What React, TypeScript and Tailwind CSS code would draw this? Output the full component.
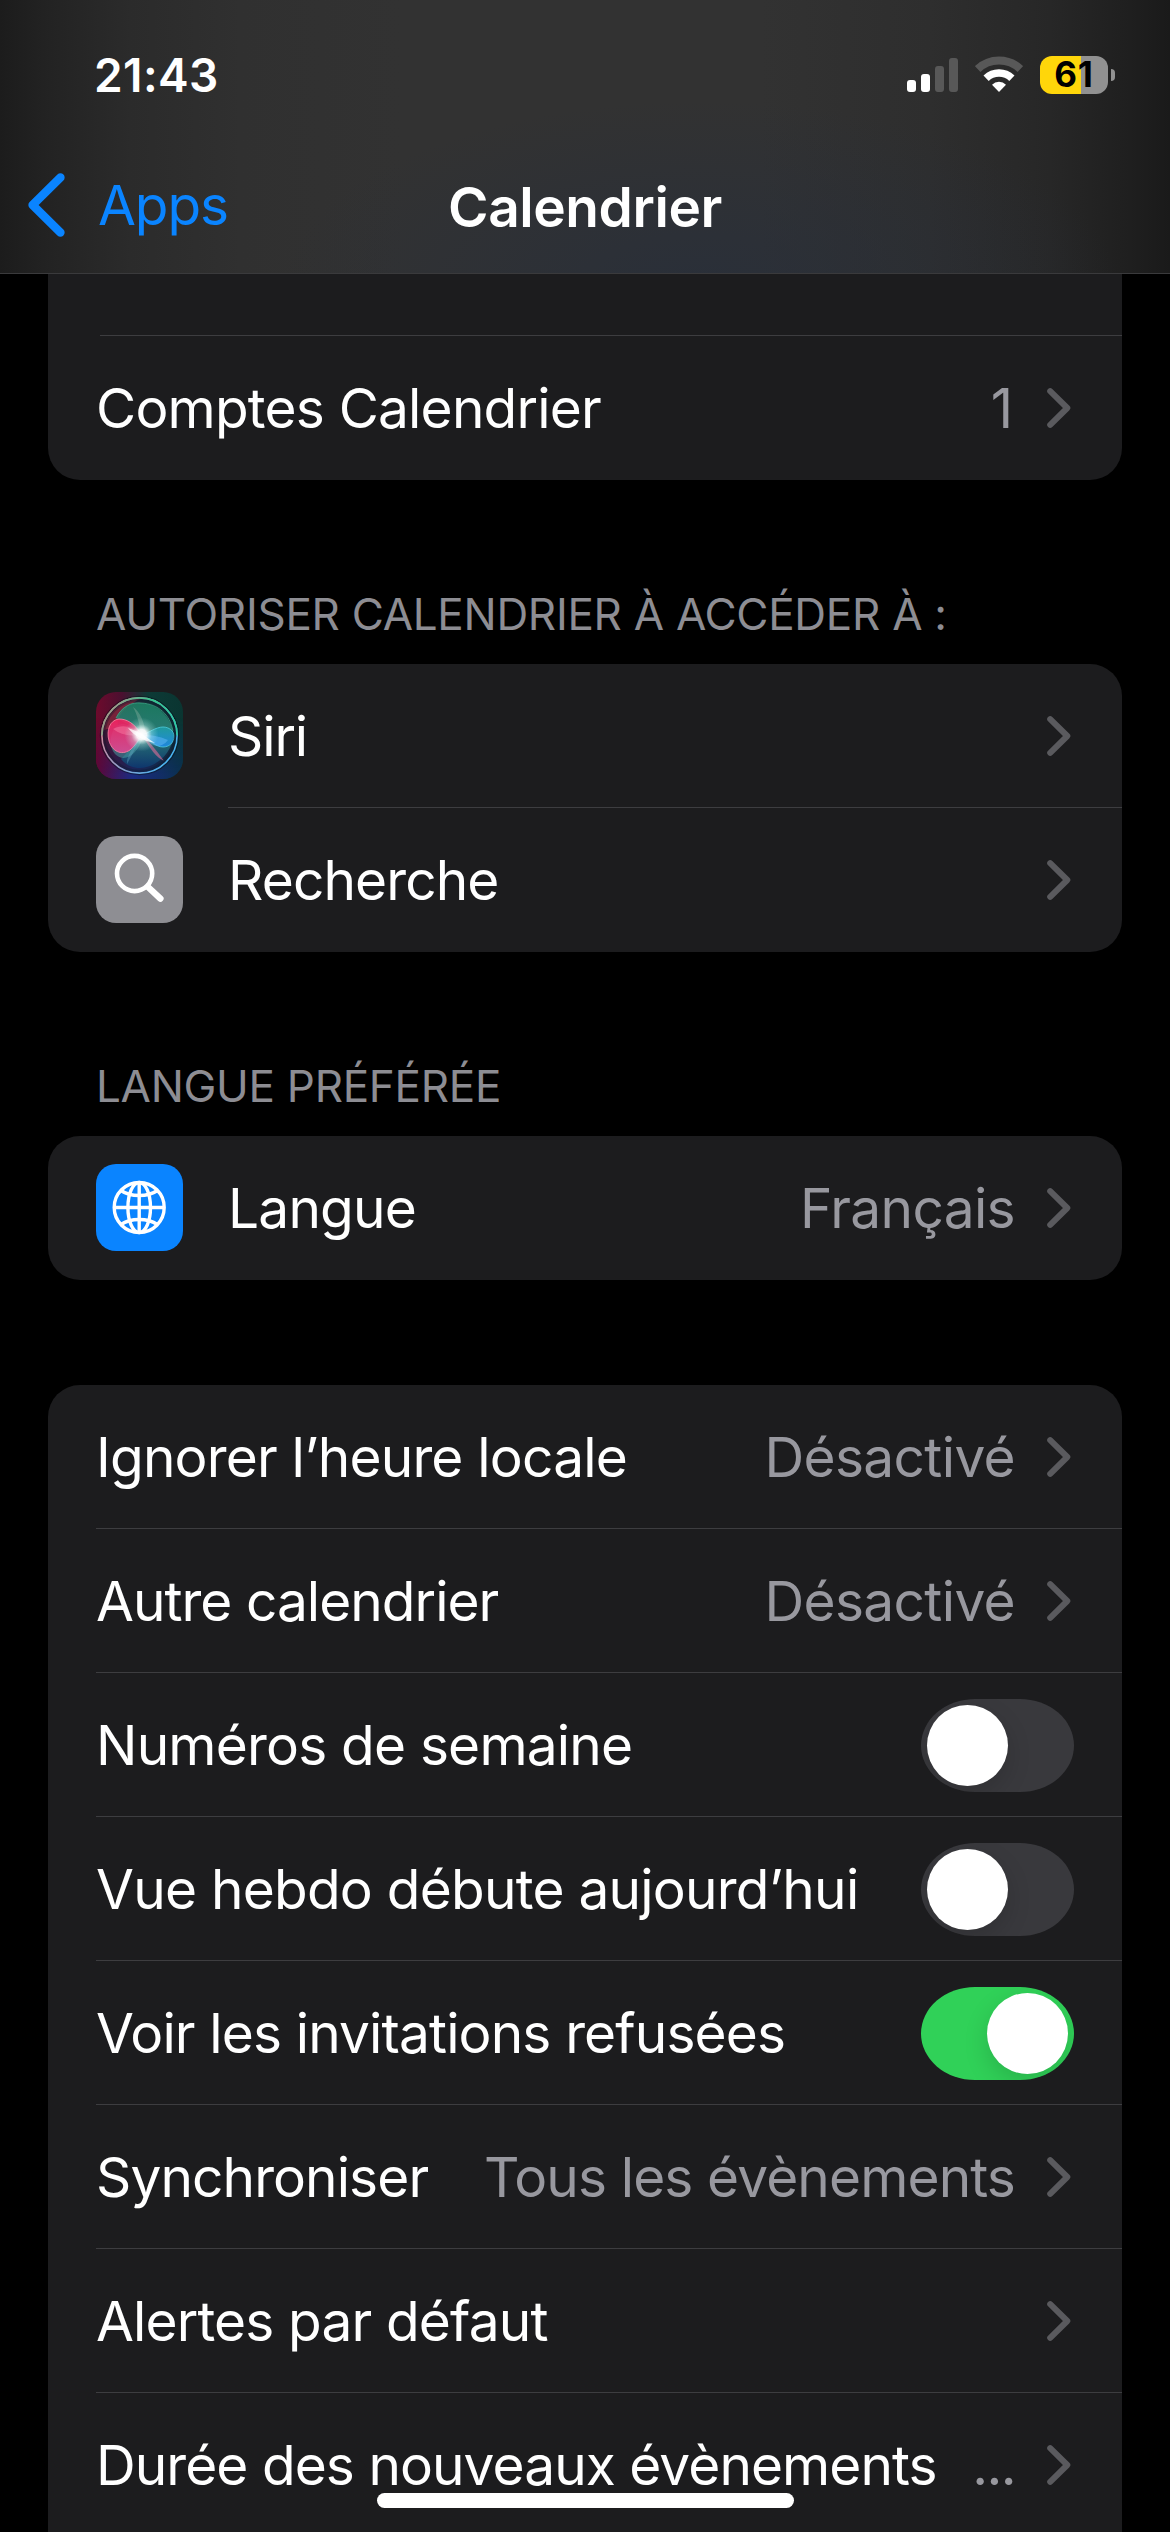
import React from 'react';

interface RowProps {
    label: string;
    tracking?: string;
    value?: string;
    valueTracking?: string;
    icon?: React.ReactNode;
    toggle?: boolean;
    last?: boolean;
}

const ChevronRight: React.FC = () => (
    <svg className="mr-[3px] h-10 w-6 shrink-0" viewBox="0 0 24 40" fill="none" stroke="#5a5a5e" strokeWidth="6" strokeLinecap="round" strokeLinejoin="round">
        <path d="M3.2 3.2 20.3 20 3.2 36.8" />
    </svg>
);

const SiriIcon: React.FC = () => (
    <svg className="mb-px size-[87px] shrink-0 rounded-[20px]" viewBox="0 0 87 87" fill="none">
        <defs>
            <linearGradient id="siriBase" x1="0" y1="0" x2="1" y2="0">
                <stop offset="0" stopColor="#6d0a2c" />
                <stop offset=".3" stopColor="#4a1030" />
                <stop offset=".6" stopColor="#0d3a36" />
                <stop offset="1" stopColor="#0a3531" />
            </linearGradient>
            <linearGradient id="siriBottom" x1="0" y1="0" x2="1" y2="0">
                <stop offset="0" stopColor="#5c0638" />
                <stop offset=".42" stopColor="#1b2a80" />
                <stop offset="1" stopColor="#0a3050" />
            </linearGradient>
            <linearGradient id="siriFade" x1="0" y1="0" x2="0" y2="1">
                <stop offset=".3" stopColor="#000" />
                <stop offset=".95" stopColor="#fff" />
            </linearGradient>
            <mask id="siriMask"><rect width="87" height="87" fill="url(#siriFade)" /></mask>
            <linearGradient id="siriRim" x1="0" y1=".2" x2="1" y2=".8">
                <stop offset="0" stopColor="#e58a93" />
                <stop offset=".5" stopColor="#8b9fc9" />
                <stop offset="1" stopColor="#3eb6f5" />
            </linearGradient>
            <linearGradient id="siriRimTop" x1="0" y1="0" x2="1" y2=".3">
                <stop offset="0" stopColor="#c98d88" />
                <stop offset=".6" stopColor="#35c58c" />
                <stop offset="1" stopColor="#2fcaa0" />
            </linearGradient>
            <linearGradient id="siriDome" x1="0" y1="0" x2="0" y2="1">
                <stop offset="0" stopColor="#1d8a68" />
                <stop offset=".5" stopColor="#2f8c84" />
                <stop offset="1" stopColor="#0c3a72" />
            </linearGradient>
            <linearGradient id="siriPink" x1="0" y1="0" x2="0" y2="1">
                <stop offset="0" stopColor="#f52360" />
                <stop offset="1" stopColor="#dc4a94" />
            </linearGradient>
            <linearGradient id="siriBlue" x1="0" y1="0" x2="0" y2="1">
                <stop offset="0" stopColor="#1fa0a4" />
                <stop offset="1" stopColor="#1e8cf0" />
            </linearGradient>
            <radialGradient id="siriGlow">
                <stop offset="0" stopColor="#fff" />
                <stop offset=".3" stopColor="#fff" stopOpacity=".92" />
                <stop offset=".6" stopColor="#d5fff8" stopOpacity=".3" />
                <stop offset="1" stopColor="#b8f5ee" stopOpacity="0" />
            </radialGradient>
        </defs>
        <rect width="87" height="87" fill="url(#siriBase)" />
        <rect width="87" height="87" fill="url(#siriBottom)" mask="url(#siriMask)" />
        <circle cx="43.5" cy="43.5" r="37" fill="#1a2238" fillOpacity=".45" />
        <path d="M8 38C10 22 24 8 44 7 30 14 20 24 22 34Z" fill="#a02c40" fillOpacity=".6" />
        <path d="M20 26C26 14 36 10 45 11c18 1 30 14 33 32-3 20-18 32-34 33-9 0-15-4-19-9 10-10 14-16 19-24C36 32 26 30 20 26Z" fill="url(#siriDome)" fillOpacity=".8" />
        <path d="M20 26C26 14 36 10 45 11c18 1 29 12 32 28" stroke="#3fae8d" strokeOpacity=".7" />
        <path d="M46 42C37 30 28 25 20 30 12 36 12 52 18 58c10 10 22 0 28-16Z" fill="#4fa5a8" fillOpacity=".5" transform="translate(1 4)" />
        <path d="M46 43C38 31 31 27 23 27 14 28 10 38 13 49c3 10 12 15 21 9 5-4 8-9 12-15Z" fill="url(#siriPink)" fillOpacity=".9" stroke="#ff86a4" strokeWidth=".8" />
        <path d="M46 42C36 34 26 32 17 37c8 6 18 8 29 5Z" fill="#ff8db0" fillOpacity=".4" />
        <path d="M46 43c6-2 14-8 21-8 6 0 11 4 11 9 0 7-5 11-11 11-8 0-12-7-21-12Z" fill="url(#siriBlue)" fillOpacity=".85" stroke="#4ecbe0" strokeWidth=".8" />
        <path d="M47 43c8 0 16 1 25 5-3 4-7 6-11 6-6-1-9-6-14-11Z" fill="#5cb6f5" fillOpacity=".55" />
        <path d="M46 43c8 7 15 16 22 26-7-3-14-12-22-26Z" fill="#d06b95" fillOpacity=".65" />
        <path d="M45 43C41 54 36 63 31 72c-1-7 6-17 14-29Z" fill="#5ea6c4" fillOpacity=".4" />
        <path d="M45 42C43 30 41 22 37 15c7 5 11 14 13 27Z" fill="#c7d5c5" fillOpacity=".25" />
        <circle cx="45.5" cy="42.5" r="17" fill="url(#siriGlow)" />
        <path d="M32 36c6 2 10 4 14 6 4 3 8 6 13 9-6-1-11-3-15-5-5-3-9-6-12-10Z" fill="#fff" fillOpacity=".75" />
        <circle cx="43.5" cy="43.5" r="39" stroke="#071018" strokeOpacity=".5" strokeWidth="1.5" />
        <circle cx="43.5" cy="43.5" r="37.6" stroke="url(#siriRim)" strokeWidth="1.6" />
        <path d="M5.9 43.5a37.6 37.6 0 0 1 75.2 0" stroke="url(#siriRimTop)" strokeWidth="1.6" />
        <circle cx="43.5" cy="43.5" r="35.5" stroke="#0a1a2a" strokeOpacity=".35" strokeWidth="2.4" />
    </svg>
);

const SearchIcon: React.FC = () => (
    <svg className="mb-px size-[87px] shrink-0 rounded-[20px] bg-[#8e8e93]" viewBox="0 0 87 87" fill="none" stroke="#fff" strokeLinecap="round">
        <circle cx="38.6" cy="37.5" r="17.6" strokeWidth="4.6" />
        <path d="M52 51 64.4 62.6" strokeWidth="6.4" />
    </svg>
);

const GlobeIcon: React.FC = () => (
    <svg className="mb-px size-[87px] shrink-0 rounded-[20px] bg-[#0a84ff]" viewBox="0 0 87 87" fill="none" stroke="#fff" strokeWidth="3.4">
        <circle cx="43.2" cy="43.5" r="25" />
        <ellipse cx="43.2" cy="43.5" rx="11.3" ry="25" />
        <path d="M43.2 18.5v50M18.2 43.5h50" />
        <path d="M25 26.5c9.5 6.7 26.9 6.7 36.4 0M25 60.5c9.5-6.7 26.9-6.7 36.4 0" />
    </svg>
);

const Toggle: React.FC<{ on: boolean }> = ({ on }) => (
    <div className={`flex h-[93px] w-[153px] shrink-0 overflow-hidden rounded-[54px/46.5px] p-1.5 ${on ? 'justify-end bg-[#30d158]' : 'justify-start bg-[#39393d]'}`}>
        <div className="size-[81px] rounded-full bg-white shadow-[0_9px_24px_rgba(0,0,0,0.15)]" />
    </div>
);

const Row: React.FC<RowProps> = ({ label, tracking = 'tracking-[-0.8px]', value, valueTracking = 'mr-8 tracking-[-0.65px]', icon, toggle, last }) => (
    <div className="flex h-36 items-center pl-12">
        {icon}
        <div className={`flex h-full min-w-0 flex-1 items-center border-b pt-px pr-12 ${icon ? 'ml-[45px]' : ''} ${last ? 'border-transparent' : 'border-[#3d3d40]'}`}>
            <span className={`flex-1 whitespace-nowrap text-white ${tracking}`}>{label}</span>
            {value && <span className={`whitespace-nowrap text-[#98989f] ${valueTracking}`}>{value}</span>}
            {toggle === undefined ? <ChevronRight /> : <Toggle on={toggle} />}
        </div>
    </div>
);

const Card: React.FC<{ children: React.ReactNode; className?: string }> = ({ children, className = 'rounded-[32px]' }) => (
    <div className={`mx-12 overflow-hidden bg-[#1c1c1e] ${className}`}>{children}</div>
);

const SectionTitle: React.FC<{ children: React.ReactNode }> = ({ children }) => (
    <h2 className="flex h-[184px] items-end pb-7 pl-24 text-[44px] leading-[44px] tracking-[-0.28px] text-[#8d8d93]">{children}</h2>
);

const StatusBar: React.FC = () => (
    <div className="flex h-[149px] items-center justify-between pr-[55px] pl-[94px]">
        <span className="text-[46px] font-semibold tracking-[0.4px] text-white">21:43</span>
        <div className="flex items-center gap-[17px]">
            <div className="flex h-[34px] items-end gap-[5px]">
                <div className="h-3 w-[9px] rounded-[3px] bg-white" />
                <div className="h-[18px] w-[9px] rounded-[3px] bg-white" />
                <div className="h-[26px] w-[9px] rounded-[3px] bg-[#585858]" />
                <div className="h-[34px] w-[9px] rounded-[3px] bg-[#585858]" />
            </div>
            <svg className="mb-[2px] h-9 w-12" viewBox="0 0 48 36" fill="none">
                <path d="M2.7 13A31 31 0 0 1 45.3 13" stroke="#585858" strokeWidth="8" />
                <path d="M11.1 22.3A18.5 18.5 0 0 1 36.9 22.3" stroke="#fff" strokeWidth="7.5" />
                <path d="M24 36 17 28.7a10 10 0 0 1 14 0Z" fill="#fff" />
            </svg>
            <div className="flex items-center gap-[3px]">
                <div className="flex h-[38px] w-[68px] items-center justify-center rounded-[12px] bg-[linear-gradient(90deg,#ffd60a_41px,#919191_41px)]">
                    <span className="text-[35px] leading-none font-bold tracking-[0.8px] text-black">61</span>
                </div>
                <div className="h-3 w-1 rounded-r-full bg-[#919191]" />
            </div>
        </div>
    </div>
);

const App: React.FC = () => {
    return (
        <div className="relative h-[2532px] w-[1170px] overflow-hidden bg-black font-['Inter',sans-serif] text-[55px] leading-[66px]">
            <header className="h-[274px] border-b border-[#3a3a3c] bg-[radial-gradient(ellipse_420px_190px_at_700px_290px,rgba(38,46,60,0.7),rgba(38,46,60,0)),linear-gradient(90deg,#1c1c1c_0px,#232323_50px,#2b2b2b_130px,#303030_240px,#323232_400px,#323232_760px,#2e2e2e_930px,#272727_1050px,#1f1f1f_1130px,#1a1a1a_1170px)]">
                <StatusBar />
                <nav className="grid h-[112px] grid-cols-3 items-center">
                    <div className="flex items-center gap-[33px] pl-7 text-[#0a84ff]">
                        <svg className="h-16 w-[37px]" viewBox="0 0 37 64" fill="none" stroke="currentColor" strokeWidth="8.5" strokeLinecap="round" strokeLinejoin="round">
                            <path d="M32.4 4.5 4.6 32 32.4 59.5" />
                        </svg>
                        <span className="tracking-[-1.1px]">Apps</span>
                    </div>
                    <h1 className="pt-[3px] text-center font-semibold tracking-[-0.42px] text-white">Calendrier</h1>
                </nav>
            </header>

            <main>
                <Card className="rounded-b-[32px]">
                    <div className="ml-[52px] h-[62px] border-b border-[#3d3d40]" />
                    <Row label="Comptes Calendrier" value="1" valueTracking="mr-[34px]" last />
                </Card>

                <SectionTitle>AUTORISER CALENDRIER À ACCÉDER À :</SectionTitle>
                <Card>
                    <Row label="Siri" tracking="tracking-[-1.1px]" icon={<SiriIcon />} />
                    <Row label="Recherche" tracking="tracking-[-0.88px]" icon={<SearchIcon />} last />
                </Card>

                <SectionTitle>LANGUE PRÉFÉRÉE</SectionTitle>
                <Card>
                    <Row label="Langue" value="Français" icon={<GlobeIcon />} last />
                </Card>

                <Card className="mt-[105px] rounded-t-[32px]">
                    <Row label="Ignorer l’heure locale" value="Désactivé" />
                    <Row label="Autre calendrier" tracking="tracking-[-0.97px]" value="Désactivé" />
                    <Row label="Numéros de semaine" toggle={false} />
                    <Row label="Vue hebdo débute aujourd’hui" tracking="tracking-[-0.76px]" toggle={false} />
                    <Row label="Voir les invitations refusées" tracking="tracking-[-0.86px]" toggle={true} />
                    <Row label="Synchroniser" tracking="tracking-[-0.9px]" value="Tous les évènements" valueTracking="mr-8 tracking-[-0.88px]" />
                    <Row label="Alertes par défaut" tracking="tracking-[-0.85px]" />
                    <Row label="Durée des nouveaux évènements" tracking="tracking-[-0.94px]" value="..." valueTracking="mr-8 tracking-[-1.6px]" />
                </Card>
            </main>

            {/* Home indicator */}
            <div className="absolute top-[2493px] left-[377px] h-[15px] w-[417px] rounded-full bg-white" />
        </div>
    );
};

export default App;
